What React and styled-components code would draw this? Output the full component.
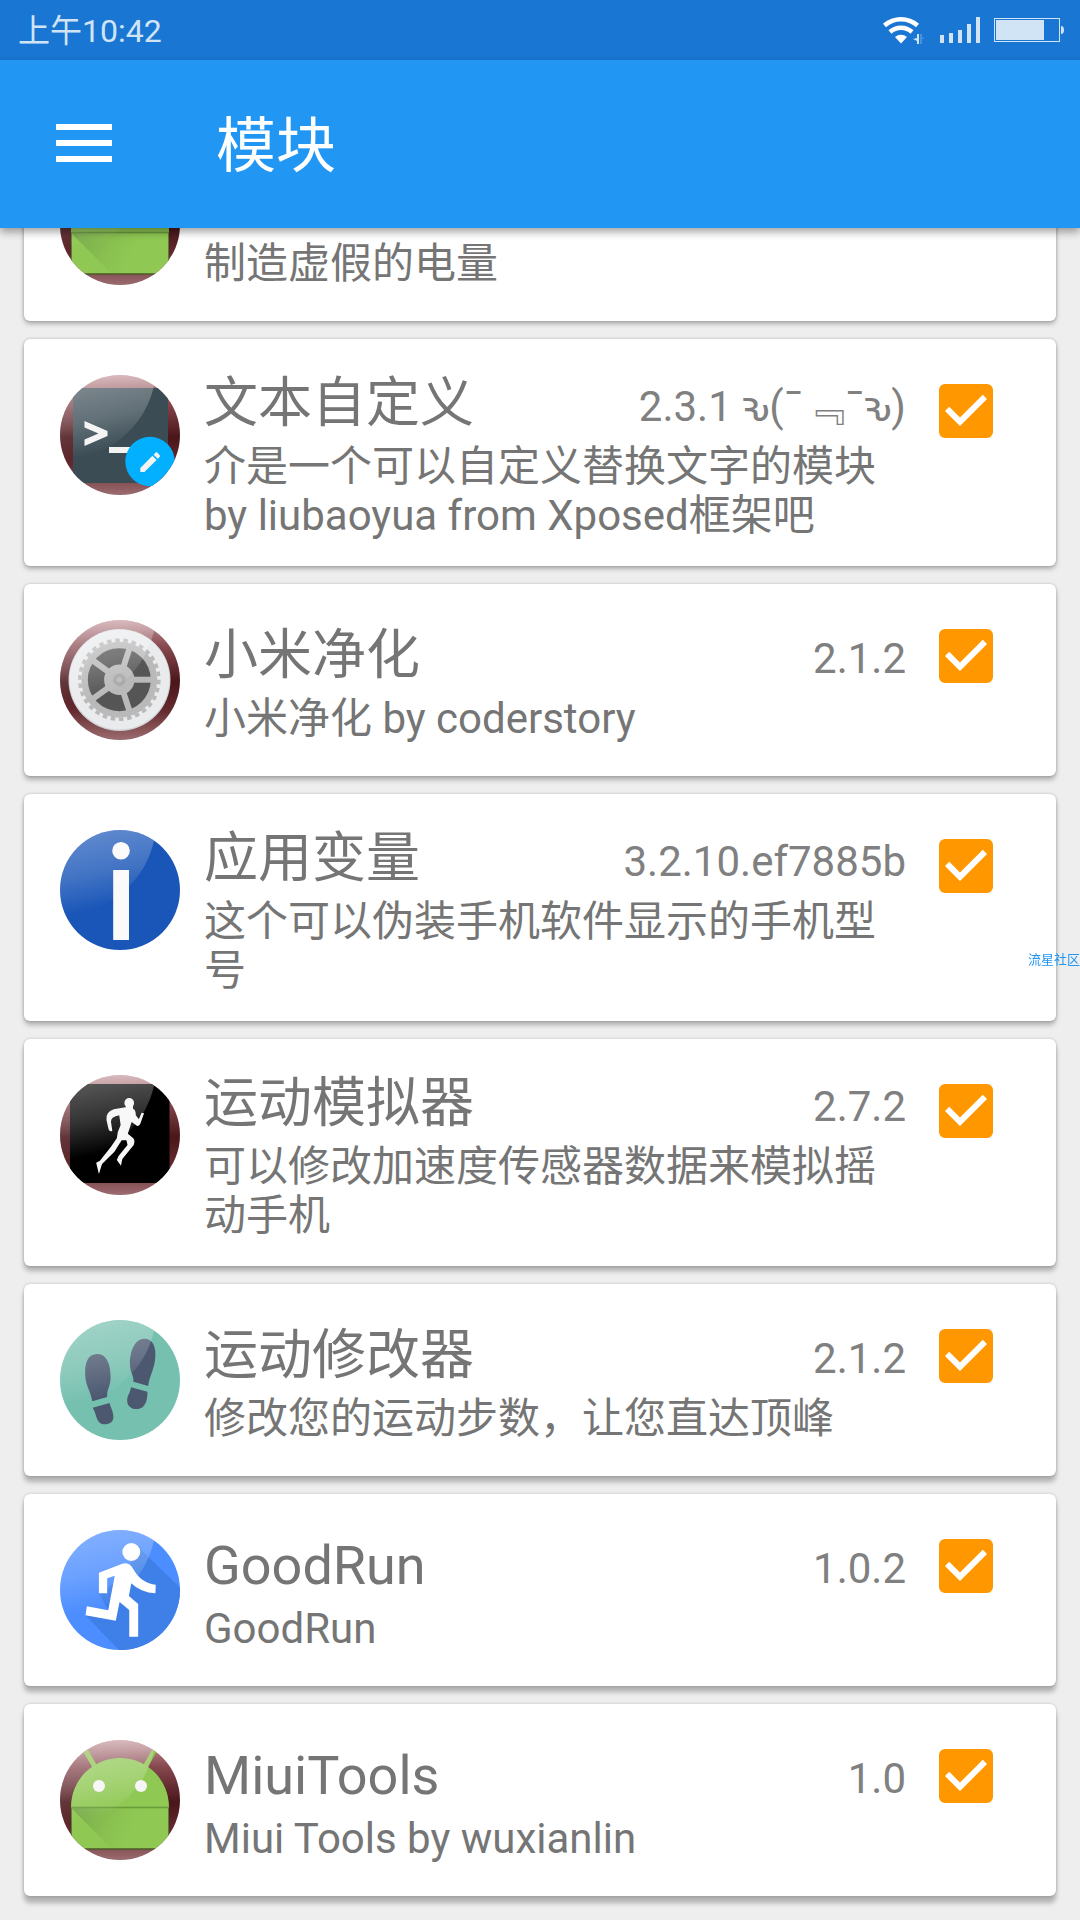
import React, { useLayoutEffect, useRef } from "react";
import styled, { createGlobalStyle } from "styled-components";

const GlobalStyle = createGlobalStyle`
  *, *::before, *::after { box-sizing: border-box; }
  body {
    margin: 0;
    background: #eeeeee;
    color: #757575;
    font-family: Roboto, "Noto Sans CJK SC", "Noto Sans", "DejaVu Sans", sans-serif;
  }
`;

const Screen = styled.div`
  display: flex;
  flex-direction: column;
  height: 100vh;
  overflow: hidden;
`;

const StatusBar = styled.div`
  display: flex;
  align-items: center;
  justify-content: space-between;
  flex: none;
  height: 60px;
  padding: 0 16px 0 18px;
  background: #1976d2;
  color: #d1e4f6;
`;

const Clock = styled.time`
  padding-top: 2px;
  font-size: 32px;
  line-height: 40px;
`;

const StatusIcons = styled.svg`
  display: block;
  width: 182px;
  height: 30px;
`;

const AppBar = styled.header`
  position: relative;
  z-index: 1;
  display: flex;
  align-items: center;
  flex: none;
  gap: 80px;
  height: 168px;
  padding: 0 32px 2px;
  background: #2196f3;
  color: #ffffff;
  box-shadow: 0 4px 8px rgba(0, 0, 0, 0.36);
`;

const MenuButton = styled.button`
  display: grid;
  place-items: center;
  width: 104px;
  height: 104px;
  padding: 0;
  border: 0;
  background: none;
  color: inherit;
  cursor: pointer;
`;

const PageTitle = styled.h1`
  margin: 0;
  padding-top: 8px;
  font-size: 60px;
  font-weight: 400;
  line-height: 72px;
`;

const Scroller = styled.main`
  flex: 1;
  min-height: 0;
  overflow-y: auto;
  scrollbar-width: none;
`;

const ModuleList = styled.ul`
  display: flex;
  flex-direction: column;
  gap: 18px;
  margin: 0;
  padding: 24px;
  list-style: none;
`;

const Card = styled.li`
  display: flex;
  align-items: flex-start;
  padding: 36px 63px 26px 36px;
  border-radius: 6px;
  background: #ffffff;
  box-shadow:
    0 ${(p) => p.$depth}px 5px rgba(0, 0, 0, 0.26),
    0 0 3px rgba(0, 0, 0, 0.22);
`;

const Avatar = styled.svg`
  flex: none;
  width: 120px;
  height: 120px;
  margin: 0 24px 10px 0;
`;

const Details = styled.div`
  flex: 1;
  min-width: 0;
  align-self: center;
`;

const Heading = styled.div`
  display: flex;
  align-items: flex-start;
  justify-content: space-between;
  gap: 16px;
  height: 67px;
`;

const Name = styled.h2`
  margin: 0;
  font-size: 54px;
  font-weight: 400;
  line-height: 57px;
  white-space: nowrap;
`;

const Version = styled.span`
  padding-top: 7px;
  color: #808080;
  font-size: 42px;
  line-height: 49px;
  white-space: nowrap;
`;

const Description = styled.p`
  margin: 0;
  font-size: 42px;
  line-height: 49px;
  white-space: pre-line;
`;

const Toggle = styled.label`
  display: grid;
  flex: none;
  width: 54px;
  height: 54px;
  margin: 9px 0 0 33px;
  cursor: pointer;
`;

const ToggleInput = styled.input`
  grid-area: 1 / 1;
  appearance: none;
  width: 54px;
  height: 54px;
  margin: 0;
  border: 6px solid #757575;
  border-radius: 6px;
  cursor: pointer;

  &:checked {
    border-color: #ff9800;
    background: #ff9800;
  }

  &:not(:checked) + svg {
    visibility: hidden;
  }
`;

const Tick = styled.svg`
  grid-area: 1 / 1;
  width: 54px;
  height: 54px;
  pointer-events: none;
`;

const Watermark = styled.div`
  position: fixed;
  top: 950px;
  right: 0;
  z-index: 2;
  color: #2196f3;
  font-size: 13px;
  line-height: 19px;
`;

function IconDefs() {
  return (
    <svg width="0" height="0" style={{ position: "absolute" }} aria-hidden="true">
      <defs>
        <clipPath id="disc">
          <circle cx="60" cy="60" r="60" />
        </clipPath>
        <linearGradient id="maroon" x1="0" y1="0" x2="0" y2="1">
          <stop offset="0" stopColor="#c4959b" />
          <stop offset="0.22" stopColor="#86494f" />
          <stop offset="0.52" stopColor="#4a161a" />
          <stop offset="0.75" stopColor="#632a2e" />
          <stop offset="1" stopColor="#9c6c70" />
        </linearGradient>
        <linearGradient id="gloss" x1="0.4" y1="0" x2="0.62" y2="1">
          <stop offset="0" stopColor="#fff" stopOpacity="0.36" />
          <stop offset="0.45" stopColor="#fff" stopOpacity="0.2" />
          <stop offset="0.82" stopColor="#fff" stopOpacity="0" />
        </linearGradient>
        <linearGradient id="fold" x1="0" y1="0" x2="1" y2="0.2">
          <stop offset="0" stopColor="#5d8a3c" stopOpacity="0.55" />
          <stop offset="0.7" stopColor="#7cab4b" stopOpacity="0" />
        </linearGradient>
      </defs>
    </svg>
  );
}

function Disc({ fill = "url(#maroon)", shine = 1, children }) {
  return (
    <Avatar viewBox="0 0 120 120" aria-hidden="true">
      <g clipPath="url(#disc)">
        <rect width="120" height="120" fill={fill} />
        {children}
        <path d="M0 0H96C91 36 70 74 0 92Z" fill="url(#gloss)" opacity={shine} />
      </g>
    </Avatar>
  );
}

function RobotIcon() {
  return (
    <Disc>
      <path d="M24 8 35 27M96 8 85 27" stroke="#8bc34a" strokeWidth="5" />
      <path d="M11 67A49 49 0 0 1 109 67V109H11Z" fill="#8fc853" />
      <path d="M11 68H109V109H52Z" fill="url(#fold)" />
      <path d="M11 67.5H109" stroke="#6a9a3c" strokeWidth="1.4" />
      <path d="M11.5 68V109M108.5 68V109" stroke="#5b7d36" strokeWidth="1" />
      <path d="M11 109H109" stroke="#4c5a28" strokeWidth="1.6" />
      <circle cx="39" cy="46" r="6" fill="#f5f5f5" />
      <circle cx="81" cy="46" r="6" fill="#f5f5f5" />
    </Disc>
  );
}

function TerminalIcon() {
  return (
    <Disc>
      <rect x="13" y="13" width="95" height="95" fill="#3b4c55" />
      <path d="M24.5 46 47.5 56V61L24.5 71V64.5L38.5 58.5 24.5 52.5Z" fill="#f3f3f3" />
      <rect x="49" y="72" width="24" height="6" fill="#f3f3f3" />
      <circle cx="90" cy="86.5" r="24.7" fill="#03b0ff" />
      <path
        transform="translate(77 74) scale(1.1)"
        d="M3 17.25V21h3.75L17.81 9.94l-3.75-3.75L3 17.25zM20.71 7.04c.39-.39.39-1.02 0-1.41l-2.34-2.34c-.39-.39-1.02-.39-1.41 0l-1.83 1.83 3.75 3.75 1.83-1.83z"
        fill="#f3f3f3"
      />
    </Disc>
  );
}

function GearIcon() {
  return (
    <Disc>
      <circle cx="59.5" cy="60" r="51" fill="#cfd2d4" />
      <circle cx="59.5" cy="59.5" r="50" fill="#e9ebed" />
      <g transform="translate(59.3 59.7)">
        <circle r="38" fill="#b9b9b9" />
        <circle r="39.5" fill="none" stroke="#b9b9b9" strokeWidth="3.6" pathLength="60" strokeDasharray="1.1 0.9" />
        <circle r="31.5" fill="#555555" />
        {[0, 72, 144, 216, 288].map((angle) => (
          <rect key={angle} x="8" y="-3" width="26" height="6" fill="#b9b9b9" transform={`rotate(${angle})`} />
        ))}
        <circle r="15.2" fill="#b9b9b9" />
        <circle r="4.5" fill="none" stroke="#a6a6a6" strokeWidth="3.4" />
      </g>
    </Disc>
  );
}

function InfoIcon() {
  return (
    <Disc fill="#1a56b8" shine={0.85}>
      <circle cx="61" cy="20.7" r="8.8" fill="#fafafa" />
      <rect x="53.2" y="40" width="15.8" height="70" fill="#fafafa" />
    </Disc>
  );
}

function SprinterIcon() {
  return (
    <Disc>
      <rect x="10" y="9" width="99.5" height="99" fill="#000000" />
      <g transform="scale(0.3444 0.3333) translate(-174 -135)" fill="#f6f6f6">
        <ellipse cx="375" cy="219" rx="14" ry="15" />
        <path d="M364 232 330 238Q306 246 309 270L315 298Q318 306 326 303L322 275Q322 260 346 256L350 285Q340 305 339 325L322 350 290 392 279 398 287 432 296 402 332 365 353 331 367 331 370 345 344 378 339 390 351 407 355 387 388 345Q393 330 386 324L371 311 382 276 398 288Q406 288 409 276L418 250 411 248 403 268 394 256Q394 238 386 236L386 225Z" />
      </g>
    </Disc>
  );
}

function FootprintsIcon() {
  return (
    <Disc fill="#76c0af" shine={0.85}>
      <g transform="scale(0.3444 0.3333) translate(-174 -120)" fill="#4b5870">
        <path d="M282 222C255 222 246 248 247 282C248 318 262 330 268 364L311 351C309 330 321 320 321 292C321 258 312 222 282 222Z" />
        <path d="M269 383 318 369C321 385 329 392 329 412C329 426 318 433 305 433C278 433 282 405 269 383Z" />
        <path d="M420 176C390 176 377 215 377 250C377 280 389 285 387 305L430 318C434 285 451 265 451 222C451 195 440 176 420 176Z" />
        <path d="M380 322 428 335C428 352 426 387 396 387C378 387 369 375 369 362C369 346 378 340 380 322Z" />
      </g>
    </Disc>
  );
}

function RunnerIcon() {
  return (
    <Disc fill="#4c8dff" shine={0.85}>
      <g transform="scale(0.3444 0.3333) translate(-174 -120)">
        <path d="M400 170 530 300V480H345L248 376 314 361 287 310 360 260Z" fill="#3f80e8" />
        <ellipse cx="381" cy="186" rx="26" ry="27" fill="#ffffff" />
        <path
          d="M287 248 355 221Q376 214 387 238Q412 282 452 284L451 310Q408 308 381 280L374 318 401 342V440H375V360L347 336 336 392 248 376 252 349 314 361 333 257 311 265V310H287Z"
          fill="#ffffff"
        />
      </g>
    </Disc>
  );
}

const modules = [
  { icon: RobotIcon, text: "制造虚假的电量", depth: 3 },
  {
    icon: TerminalIcon,
    name: "文本自定义",
    version: "2.3.1 ԅ(¯﹃¯ԅ)",
    text: "介是一个可以自定义替换文字的模块\nby liubaoyua from Xposed框架吧",
    depth: 3,
  },
  { icon: GearIcon, name: "小米净化", version: "2.1.2", text: "小米净化 by coderstory", depth: 4 },
  { icon: InfoIcon, name: "应用变量", version: "3.2.10.ef7885b", text: "这个可以伪装手机软件显示的手机型号", depth: 4 },
  { icon: SprinterIcon, name: "运动模拟器", version: "2.7.2", text: "可以修改加速度传感器数据来模拟摇动手机", depth: 5 },
  { icon: FootprintsIcon, name: "运动修改器", version: "2.1.2", text: "修改您的运动步数，让您直达顶峰", depth: 6 },
  { icon: RunnerIcon, name: "GoodRun", version: "1.0.2", text: "GoodRun", depth: 6 },
  { icon: RobotIcon, name: "MiuiTools", version: "1.0", text: "Miui Tools by wuxianlin", depth: 7 },
];

function ModuleCard({ icon: Icon, name, version, text, depth }) {
  return (
    <Card $depth={depth}>
      <Icon />
      <Details>
        <Heading>
          {name && <Name>{name}</Name>}
          {version && <Version>{version}</Version>}
        </Heading>
        <Description>{text}</Description>
      </Details>
      <Toggle>
        <ToggleInput type="checkbox" defaultChecked aria-label={name || text} />
        <Tick viewBox="3 3 18 18" aria-hidden="true">
          <path d="M10 17 5 12l1.41-1.41L10 14.17l7.59-7.59L19 8z" fill="#ffffff" />
        </Tick>
      </Toggle>
    </Card>
  );
}

export default function App() {
  const scroller = useRef(null);

  useLayoutEffect(() => {
    scroller.current.scrollTop = scroller.current.scrollHeight;
  }, []);

  return (
    <>
      <GlobalStyle />
      <IconDefs />
      <Screen>
        <StatusBar>
          <Clock>上午10:42</Clock>
          <StatusIcons viewBox="882 15 182 30" aria-hidden="true">
            <g fill="none" stroke="#ffffff" strokeWidth="4.6">
              <path d="M884.5 25.5A25 25 0 0 1 917.5 25.5" />
              <path d="M890 32A16.5 16.5 0 0 1 912 32" />
            </g>
            <path d="M901 43.5 895 37A9 9 0 0 1 907 37Z" fill="#ffffff" />
            <path d="M917 34h2v10h-2v-3l-4-2 4-1z" fill="#d1e4f6" />
            <path d="M920 34h2v3l3 2h-3v5h-2z" fill="#4a90dc" />
            <g fill="#d1e4f6">
              <rect x="940" y="35" width="4" height="8" />
              <rect x="949" y="33" width="4" height="10" />
              <rect x="958" y="30" width="4" height="13" />
              <rect x="967" y="24" width="4" height="19" />
              <rect x="976" y="17" width="4" height="26" />
              <rect x="996" y="20" width="48" height="20" />
              <path d="M1061 26q3 0 3 4t-3 4z" />
            </g>
            <rect x="994.5" y="18.5" width="65" height="23" fill="none" stroke="#d1e4f6" />
          </StatusIcons>
        </StatusBar>
        <AppBar>
          <MenuButton type="button" aria-label="菜单">
            <svg width="56" height="38" viewBox="0 0 56 38" aria-hidden="true">
              <path d="M0 0h56v6H0zM0 16h56v6H0zM0 32h56v6H0z" fill="currentColor" />
            </svg>
          </MenuButton>
          <PageTitle>模块</PageTitle>
        </AppBar>
        <Scroller ref={scroller}>
          <ModuleList>
            {modules.map((item) => (
              <ModuleCard key={item.text} {...item} />
            ))}
          </ModuleList>
        </Scroller>
      </Screen>
      <Watermark>流星社区</Watermark>
    </>
  );
}
